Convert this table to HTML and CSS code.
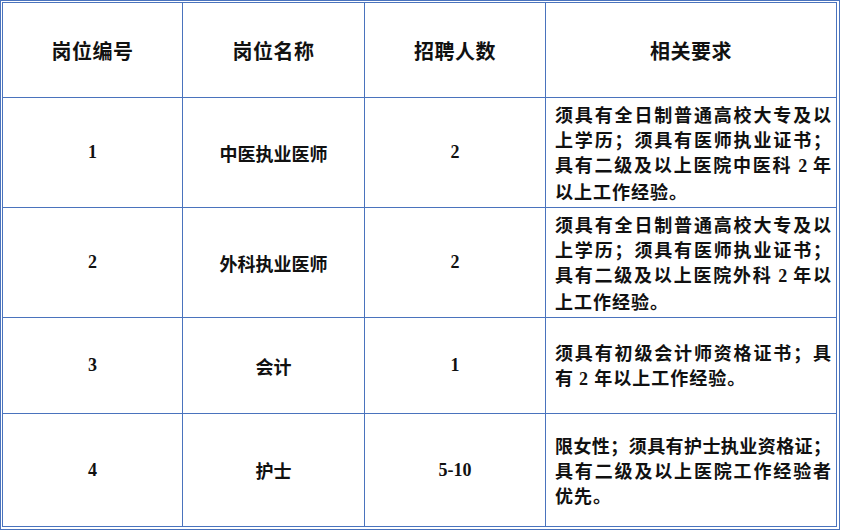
FILE: index.html
```html
<!DOCTYPE html>
<html lang="zh-CN">
<head>
<meta charset="utf-8">
<title>岗位表</title>
<link rel="stylesheet" href="styles.css">
</head>
<body>
<div class="frame">
  <div class="grid">
    <div class="cell head">岗位编号</div>
    <div class="cell head">岗位名称</div>
    <div class="cell head">招聘人数</div>
    <div class="cell head">相关要求</div>

    <div class="cell num">1</div>
    <div class="cell name">中医执业医师</div>
    <div class="cell num">2</div>
    <div class="cell req"><div><span class="ln">须具有全日制普通高校大专及以</span><span class="ln">上学历；须具有医师执业证书；</span><span class="ln">具有二级及以上医院中医科 <b class="d">2</b> 年</span><span class="ln last">以上工作经验。</span></div></div>

    <div class="cell num">2</div>
    <div class="cell name">外科执业医师</div>
    <div class="cell num">2</div>
    <div class="cell req"><div><span class="ln">须具有全日制普通高校大专及以</span><span class="ln">上学历；须具有医师执业证书；</span><span class="ln">具有二级及以上医院外科 <b class="d">2</b> 年以</span><span class="ln last">上工作经验。</span></div></div>

    <div class="cell num">3</div>
    <div class="cell name">会计</div>
    <div class="cell num">1</div>
    <div class="cell req"><div><span class="ln">须具有初级会计师资格证书；具</span><span class="ln last">有 <b class="d">2</b> 年以上工作经验。</span></div></div>

    <div class="cell num">4</div>
    <div class="cell name">护士</div>
    <div class="cell num">5-10</div>
    <div class="cell req"><div><span class="ln">限女性；须具有护士执业资格证；</span><span class="ln">具有二级及以上医院工作经验者</span><span class="ln last">优先。</span></div></div>
  </div>
</div>
</body>
</html>
```

FILE: styles.css
```css
html, body {
  margin: 0;
  padding: 0;
  background: #ffffff;
}

.frame {
  box-sizing: border-box;
  width: 840px;
  height: 530px;
  border: 1px solid #4a73bd;
  padding: 1px 2px 2px 1px;
  background: #ffffff;
}

.grid {
  display: grid;
  grid-template-columns: 179px 181px 180px 290px;
  grid-template-rows: 94px 109px 109px 95px 112px;
  gap: 1px;
  padding: 1px;
  background: #4a73bd;
  width: 835px;
  height: 525px;
  box-sizing: border-box;
}

.cell {
  background: #ffffff;
  display: flex;
  align-items: center;
  justify-content: center;
  color: #111111;
  font-family: "Noto Sans CJK SC", sans-serif;
}

.head {
  font-size: 20px;
  font-weight: 700;
  letter-spacing: 0.5px;
}

.name {
  font-size: 18px;
  font-weight: 700;
}

.num {
  font-family: "Liberation Serif", "Noto Sans CJK SC", serif;
  font-size: 18px;
  font-weight: 700;
}

.req {
  justify-content: flex-start;
  padding-left: 9px;
  font-size: 18px;
  font-weight: 700;
  line-height: 25px;
}

.ln {
  display: block;
  width: 276px;
  white-space: nowrap;
  text-align: justify;
  text-align-last: justify;
  text-justify: inter-character;
}

.ln.last {
  text-align: left;
  text-align-last: left;
  letter-spacing: 1px;
}

.d {
  font-family: "Liberation Serif", serif;
  font-weight: 700;
}
```
